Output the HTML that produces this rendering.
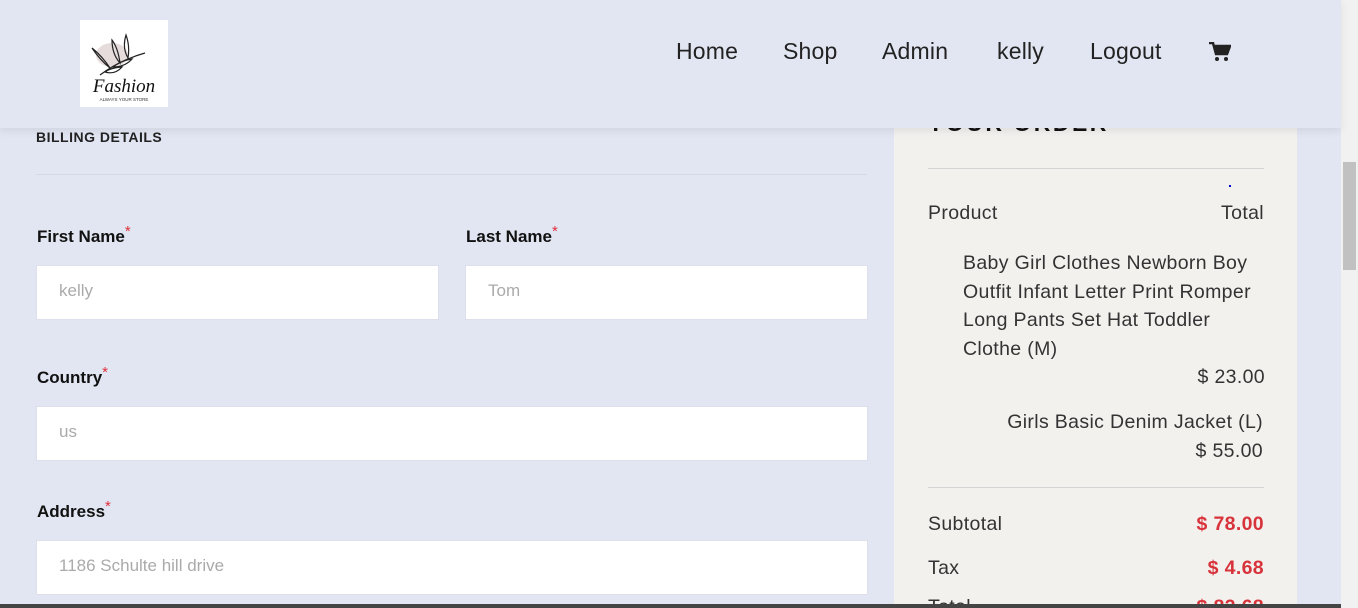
<!DOCTYPE html>
<html style="overflow:hidden;height:608px"><head><style>
*{margin:0;padding:0;box-sizing:border-box}
body{width:1358px;height:608px;overflow:hidden;background:#e2e6f2;font-family:"Liberation Sans",sans-serif;position:relative}
.wrap{position:absolute;left:0;top:0;width:1358px;height:608px;overflow:hidden}
.hdr{position:absolute;left:0;top:0;width:1341px;height:128px;background:#e2e6f2;box-shadow:0 3px 8px rgba(0,0,0,.08);z-index:5}
.logo{position:absolute;left:80px;top:20px;width:88px;height:87px;background:#fff}
.nav a{position:absolute;top:38px;font-size:23px;color:#222;text-decoration:none;letter-spacing:.2px}
.lbl{position:absolute;font-weight:bold;font-size:17px;color:#111}
.lbl span{color:#e0303c;font-weight:normal;font-size:15px;vertical-align:top;position:relative;top:-4px}
.inp{position:absolute;background:#fff;border:1px solid #dde0ea;height:55px;font-size:17px;color:#aaa;padding:15px 22px}
.side{position:absolute;left:894px;top:100px;width:403px;height:508px;background:#f2f1ee}
.t{position:absolute;font-size:19.5px;color:#333;letter-spacing:.35px}
.red{color:#d8333b;font-weight:bold}
.hr{position:absolute;left:928px;width:336px;height:1px;background:#d3d3d3}
.sb{position:absolute;left:1341px;top:0;width:17px;height:608px;background:#f1f1f1}
</style></head><body><div class="wrap">
<div class="hdr">
<div class="logo"><svg width="88" height="87" viewBox="0 0 88 87">
<ellipse cx="32" cy="35" rx="16" ry="12" fill="#e7dcdc"/>
<path d="M20 55 Q40 40 65 33" stroke="#222" fill="none" stroke-width="1.2"/>
<path d="M30 48 Q22 36 12 28 Q20 40 30 48Z M40 43 Q38 28 32 20 Q32 34 40 43Z M48 38 Q50 26 46 15 Q42 28 48 38Z M33 47 Q45 47 52 39 Q40 41 33 47Z M25 52 Q35 55 42 47 Q30 48 25 52Z" stroke="#222" fill="none" stroke-width="1.2"/>
<text x="44" y="72" text-anchor="middle" font-family="Liberation Serif,serif" font-style="italic" font-size="19" fill="#111">Fashion</text>
<text x="44" y="81" text-anchor="middle" font-size="4.5" fill="#333">ALWAYS YOUR STORE</text></svg></div>
<div class="nav"><a style="left:676px">Home</a><a style="left:783px">Shop</a><a style="left:882px">Admin</a><a style="left:997px">kelly</a><a style="left:1090px">Logout</a>
<svg style="position:absolute;left:1209px;top:42px" width="22" height="20" viewBox="0 0 22 20"><path d="M0 1h4l3 11h11l3-8H6" fill="none" stroke="#222" stroke-width="2.5"/><rect x="6" y="4" width="14" height="7" fill="#222"/><circle cx="8" cy="17" r="2" fill="#222"/><circle cx="17" cy="17" r="2" fill="#222"/></svg></div>
</div>
<div style="position:absolute;left:36px;top:129px;font-size:14px;font-weight:bold;color:#222;letter-spacing:.5px">BILLING DETAILS</div>
<div style="position:absolute;left:36px;top:174px;width:831px;height:1px;background:#d6d9e4"></div>
<div class="lbl" style="left:37px;top:227px">First Name<span>*</span></div>
<div class="lbl" style="left:466px;top:227px">Last Name<span>*</span></div>
<div class="inp" style="left:36px;top:265px;width:403px">kelly</div>
<div class="inp" style="left:465px;top:265px;width:403px">Tom</div>
<div class="lbl" style="left:37px;top:368px">Country<span>*</span></div>
<div class="inp" style="left:36px;top:406px;width:832px">us</div>
<div class="lbl" style="left:37px;top:502px">Address<span>*</span></div>
<div class="inp" style="left:36px;top:540px;width:832px">1186 Schulte hill drive</div>
<div class="side"></div>
<div style="position:absolute;left:928px;top:110px;font-size:23px;font-weight:bold;letter-spacing:2.5px;color:#111">YOUR ORDER</div>
<div class="hr" style="top:168px"></div>
<div style="position:absolute;left:1229px;top:185px;width:2px;height:2px;background:#00c"></div>
<div class="t" style="left:928px;top:202px">Product</div>
<div class="t" style="left:1180px;top:202px;width:84px;text-align:right">Total</div>
<div class="t" style="left:963px;top:249px;width:302px;line-height:28.5px">Baby Girl Clothes Newborn Boy Outfit Infant Letter Print Romper Long Pants Set Hat Toddler Clothe (M)<div style="text-align:right">$ 23.00</div></div>
<div class="t" style="left:963px;top:408px;width:300px;line-height:28.5px;text-align:right">Girls Basic Denim Jacket (L)<br>$ 55.00</div>
<div class="hr" style="top:487px"></div>
<div class="t" style="left:928px;top:513px">Subtotal</div>
<div class="t red" style="left:1100px;top:513px;width:164px;text-align:right">$ 78.00</div>
<div class="t" style="left:928px;top:557px">Tax</div>
<div class="t red" style="left:1100px;top:557px;width:164px;text-align:right">$ 4.68</div>
<div class="t" style="left:928px;top:596px">Total</div>
<div class="t red" style="left:1100px;top:596px;width:164px;text-align:right">$ 82.68</div>
<div class="sb"><div style="position:absolute;left:2px;top:162px;width:13px;height:108px;background:#c1c1c1"></div></div>
<div style="position:absolute;left:0;top:604px;width:1341px;height:4px;background:#444;z-index:6"></div>
</div></body></html>
